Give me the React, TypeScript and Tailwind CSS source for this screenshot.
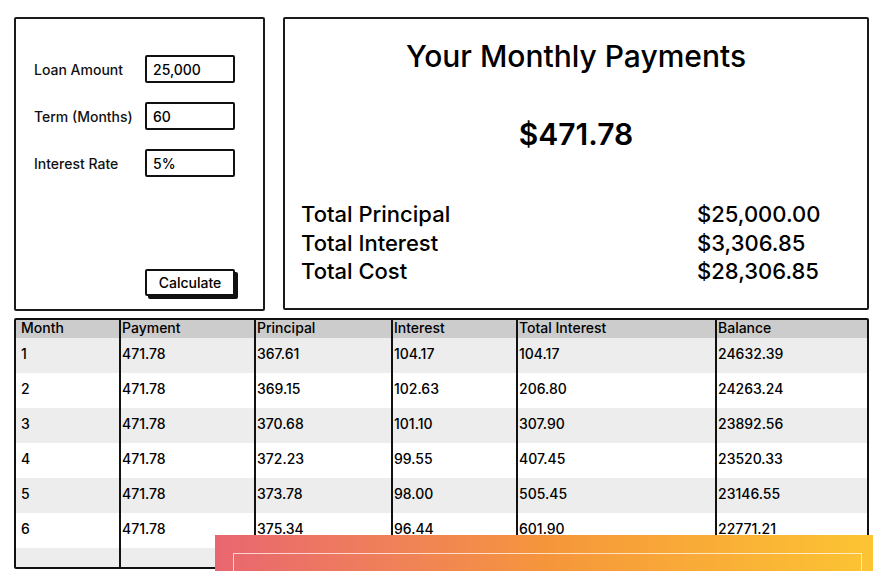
import React from "react";

const rows = [
  ["1", "471.78", "367.61", "104.17", "104.17", "24632.39"],
  ["2", "471.78", "369.15", "102.63", "206.80", "24263.24"],
  ["3", "471.78", "370.68", "101.10", "307.90", "23892.56"],
  ["4", "471.78", "372.23", "99.55", "407.45", "23520.33"],
  ["5", "471.78", "373.78", "98.00", "505.45", "23146.55"],
  ["6", "471.78", "375.34", "96.44", "601.90", "22771.21"],
  ["", "", "", "", "", ""],
];

const headers = ["Month", "Payment", "Principal", "Interest", "Total Interest", "Balance"];
const cols = "grid grid-cols-[103px_135px_137px_125px_199px_1fr]";

const Field: React.FC<{ label: string; value: string }> = ({ label, value }) => (
  <div className="flex items-center h-[28px]">
    <span className="w-[111px] text-[14px] text-[#111]">{label}</span>
    <div className="w-[90px] h-[28px] border-2 border-[#111] rounded-[2px] px-[6px] flex items-center text-[14px]">
      {value}
    </div>
  </div>
);

export default function App() {
  return (
    <div
      className="relative w-[873px] h-[571px] overflow-hidden bg-white text-black font-medium"
      style={{ fontFamily: 'Inter, "Open Sans", sans-serif' }}>
      <div className="pl-[14px] pt-[17px]">
        <div className="flex">
          <div className="w-[251px] h-[294px] border-2 border-[#1a1a1a] rounded-[2px] pl-[18px] pt-[36px] flex flex-col">
            <div className="flex flex-col gap-[19px]">
              <Field label="Loan Amount" value="25,000" />
              <Field label="Term (Months)" value="60" />
              <Field label="Interest Rate" value="5%" />
            </div>
            <div className="mt-auto mb-[13px] ml-[111px]">
              <button className="w-[90px] h-[27px] border-2 border-[#111] rounded-[2px] bg-white text-[14px] shadow-[3px_3px_0_#111]">
                Calculate
              </button>
            </div>
          </div>
          <div className="ml-[18px] w-[586px] h-[293px] border-2 border-[#1a1a1a] rounded-[2px] flex flex-col">
            <div className="text-center text-[30px] font-medium mt-[17px] leading-[40px]">
              Your Monthly Payments
            </div>
            <div className="text-center text-[30px] font-semibold mt-[39px] leading-[38px]">
              $471.78
            </div>
            <div className="mt-[47px] pl-[16px] flex text-[22px] leading-[28.5px]">
              <div className="w-[396px]">
                <div>Total Principal</div>
                <div>Total Interest</div>
                <div>Total Cost</div>
              </div>
              <div>
                <div>$25,000.00</div>
                <div>$3,306.85</div>
                <div>$28,306.85</div>
              </div>
            </div>
          </div>
        </div>

        <div className="mt-[7px] w-[855px] h-[251px] border-2 border-[#111] rounded-[2px] overflow-hidden text-[14px]">
          <div className={`${cols} h-[18px] bg-[#cccccc] leading-[16px]`}>
            {headers.map((h, i) => (
              <div key={h} className={i === 0 ? "pl-[5px]" : "border-l-2 border-[#111] pl-[1px]"}>
                {h}
              </div>
            ))}
          </div>
          {rows.map((r, ri) => (
            <div
              key={ri}
              className={`${cols} h-[35px] ${ri % 2 === 0 ? "bg-[#ededed]" : "bg-white"}`}>
              {r.map((c, ci) => (
                <div
                  key={ci}
                  className={`flex items-center pb-[4px] ${ci === 0 ? "pl-[5px]" : "border-l-2 border-[#111] pl-[1px]"}`}>
                  {c}
                </div>
              ))}
            </div>
          ))}
        </div>
      </div>

      <div className="absolute left-[215px] top-[535px] right-0 bottom-0 bg-gradient-to-r from-[#e9666f] via-[#f5953b] to-[#fcc432]">
        <div className="absolute left-[18px] top-[18px] right-[11px] h-[40px] border border-white/70" />
      </div>
    </div>
  );
}
